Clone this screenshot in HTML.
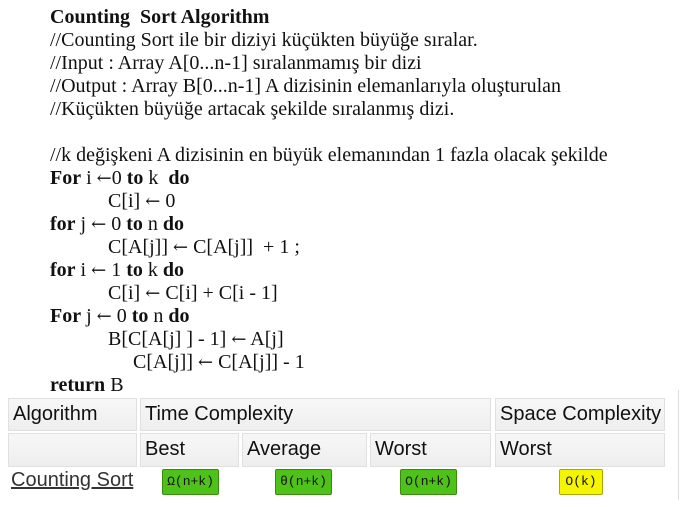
<!DOCTYPE html>
<html><head><meta charset="utf-8"><style>
body{margin:0;width:689px;height:507px;background:#fff;position:relative;overflow:hidden}
.t{position:absolute;left:50px;top:6px;font-family:"Liberation Serif",serif;font-size:20px;line-height:23px;color:#111;white-space:pre}
.t div{height:23px}
.ar{font-family:"DejaVu Serif",serif;font-size:18px}
.i1{padding-left:58px}.i2{padding-left:83px}
b{font-weight:bold}
.c{position:absolute;border:1px solid #e0e0e0;font-family:"Liberation Sans",sans-serif;font-size:20px;color:#111;padding-left:4px;box-sizing:border-box;line-height:31px;background:linear-gradient(#f7f7f7,#eeeeee)}
.bd{position:absolute;top:469px;height:24px;font-family:"Liberation Mono",monospace;font-size:13px;line-height:24px;text-align:center;border:1px solid #3a8a10;border-radius:2px;background:#4fc21a;color:#111}
a{position:absolute;left:11px;top:469px;font-family:"Liberation Sans",sans-serif;font-size:20px;color:#333;text-decoration:underline}
</style></head><body>
<div class="t"><div><b>Counting  Sort Algorithm</b></div><div>//Counting Sort ile bir diziyi küçükten büyüğe sıralar.</div><div>//Input : Array A[0...n-1] sıralanmamış bir dizi</div><div>//Output : Array B[0...n-1] A dizisinin elemanlarıyla oluşturulan</div><div>//Küçükten büyüğe artacak şekilde sıralanmış dizi.</div><div></div><div>//k değişkeni A dizisinin en büyük elemanından 1 fazla olacak şekilde</div><div><b>For</b> i <span class="ar">←</span>0 <b>to</b> k  <b>do</b></div><div class="i1">C[i] <span class="ar">←</span> 0</div><div><b>for</b> j <span class="ar">←</span> 0 <b>to</b> n <b>do</b></div><div class="i1">C[A[j]] <span class="ar">←</span> C[A[j]]  + 1 ;</div><div><b>for</b> i <span class="ar">←</span> 1 <b>to</b> k <b>do</b></div><div class="i1">C[i] <span class="ar">←</span> C[i] + C[i - 1]</div><div><b>For</b> j <span class="ar">←</span> 0 <b>to</b> n <b>do</b></div><div class="i1">B[C[A[j] ] - 1] <span class="ar">←</span> A[j]</div><div class="i2">C[A[j]] <span class="ar">←</span> C[A[j]] - 1</div><div><b>return</b> B</div></div>
<div class="c" style="left:8px;top:398px;width:129px;height:33px">Algorithm</div>
<div class="c" style="left:140px;top:398px;width:351px;height:33px">Time Complexity</div>
<div class="c" style="left:495px;top:398px;width:170px;height:33px">Space Complexity</div>
<div class="c" style="left:8px;top:433px;width:129px;height:34px"></div>
<div class="c" style="left:140px;top:433px;width:99px;height:34px">Best</div>
<div class="c" style="left:242px;top:433px;width:125px;height:34px">Average</div>
<div class="c" style="left:370px;top:433px;width:121px;height:34px">Worst</div>
<div class="c" style="left:495px;top:433px;width:170px;height:34px">Worst</div>
<a>Counting Sort</a>
<div class="bd" style="left:162px;width:55px">Ω(n+k)</div>
<div class="bd" style="left:275px;width:55px">θ(n+k)</div>
<div class="bd" style="left:400px;width:55px">O(n+k)</div>
<div class="bd" style="left:559px;width:42px;background:#f5f500;border-color:#a8a800">O(k)</div>
<div style="position:absolute;left:678px;top:390px;width:1px;height:110px;background:#ddd"></div>
</body></html>
